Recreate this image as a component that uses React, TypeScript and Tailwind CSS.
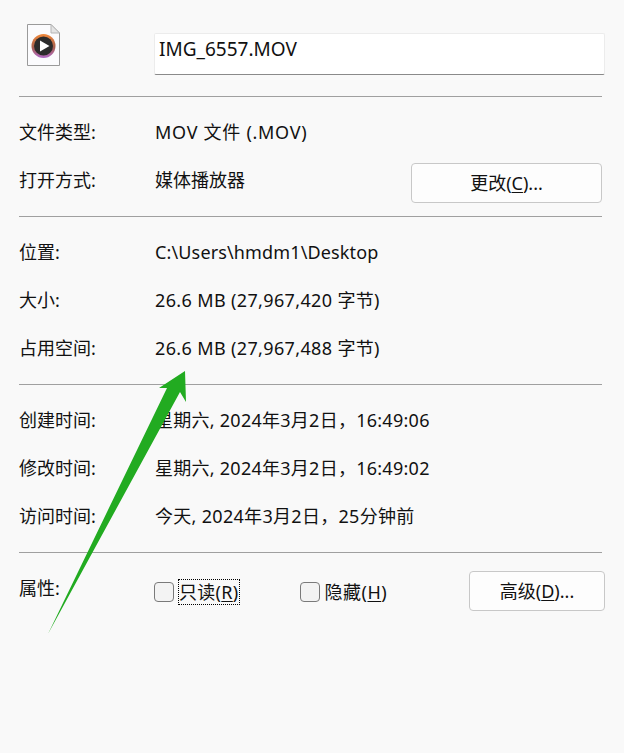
import React from 'react';

const font = { fontFamily: '"Noto Sans", "Noto Sans CJK SC", sans-serif' };

const Divider = () => <div className="h-px bg-[#a0a0a0] mr-[3px]" />;

const InfoRow = ({ label, value, tracking }: { label: string; value: string; tracking: string }) => (
  <div className="flex items-center h-12">
    <span className="w-[136px] shrink-0">{label}</span>
    <span className={tracking}>{value}</span>
  </div>
);

const FileIcon = () => (
  <svg width="34" height="44" viewBox="0 0 34 44" className="block">
    <path d="M.5.5H24L32.5 9V41.5H.5Z" fill="#fbfbfd" stroke="#9a9a9a" />
    <path d="M24 .5V9H32.5Z" fill="#e4e4e4" stroke="#b5b5b5" />
    <defs>
      <linearGradient id="ring" x1="0" y1="0" x2="0" y2="1">
        <stop offset="0" stopColor="#f0883a" />
        <stop offset="0.55" stopColor="#a8604f" />
        <stop offset="1" stopColor="#b06ac8" />
      </linearGradient>
    </defs>
    <circle cx="16.5" cy="22" r="12" fill="url(#ring)" />
    <circle cx="16.5" cy="22" r="9.5" fill="#2b2b2b" />
    <path d="M13 16.5L22.5 22L13 27.5Z" fill="#fff" />
  </svg>
);

const Button = ({ name, hotkey, className }: { name: string; hotkey: string; className: string }) => (
  <button className={`h-10 bg-[#fdfdfd] border border-[#c8c8c8] rounded-[4px] text-[18px] ${className}`}>
    {name}(<span className="underline underline-offset-2">{hotkey}</span>)...
  </button>
);

const Arrow = () => (
  <svg width="624" height="753" viewBox="0 0 624 753" className="absolute inset-0 pointer-events-none">
    <path d="M48 634L167 388L159 388L185 371L186 402L180 392Z" fill="#22ab21" />
  </svg>
);

export default function App() {
  return (
    <div className="relative w-[624px] h-[753px] overflow-hidden bg-[#f9f9f9] text-[#111111] text-[18px] pl-[19px] pr-[19px]" style={font}>
      {/* Name header */}
      <div className="flex h-[96px]">
        <div className="w-[136px] shrink-0 pt-6 pl-2">
          <FileIcon />
        </div>
        <div className="mt-[33px] -ml-px h-[42px] w-[451px] bg-white border border-[#ececec] border-b-[#8a8a8a] rounded-[2px] pl-1 text-[19px] leading-[30px]">
          IMG_6557.MOV
        </div>
      </div>
      <Divider />

      {/* Type */}
      <div className="h-[119px] pt-[11px]">
        <InfoRow label="文件类型:" value="MOV 文件 (.MOV)" tracking="tracking-[0.72px]" />
        <div className="flex items-center h-12">
          <span className="w-[136px] shrink-0">打开方式:</span>
          <span className="flex-1">媒体播放器</span>
          <Button name="更改" hotkey="C" className="w-[191px] mr-[3px] mt-[6px]" />
        </div>
      </div>
      <Divider />

      {/* Location and size */}
      <div className="h-[167px] pt-[11px]">
        <InfoRow label="位置:" value="C:\Users\hmdm1\Desktop" tracking="tracking-[0.14px]" />
        <InfoRow label="大小:" value="26.6 MB (27,967,420 字节)" tracking="tracking-[0.36px]" />
        <InfoRow label="占用空间:" value="26.6 MB (27,967,488 字节)" tracking="tracking-[0.36px]" />
      </div>
      <Divider />

      {/* Dates */}
      <div className="h-[167px] pt-[11px]">
        <InfoRow label="创建时间:" value="星期六, 2024年3月2日，16:49:06" tracking="tracking-[0.26px]" />
        <InfoRow label="修改时间:" value="星期六, 2024年3月2日，16:49:02" tracking="tracking-[0.26px]" />
        <InfoRow label="访问时间:" value="今天, 2024年3月2日，25分钟前" tracking="tracking-[0.3px]" />
      </div>
      <Divider />

      {/* Attributes */}
      <div className="flex items-center h-[40px] mt-[18px]">
        <span className="w-[135px] shrink-0 -mt-[6px]">属性:</span>
        <span className="w-5 h-5 mt-[2px] bg-[#f3f3f3] border border-[#7a7a7a] rounded-[4px] mr-[5px]" />
        <span className="outline-1 outline-dotted outline-black tracking-[0.3px] leading-[24px] mt-[2px]">
          只读(<span className="underline underline-offset-2">R</span>)
        </span>
        <span className="w-5 h-5 mt-[2px] bg-[#f3f3f3] border border-[#7a7a7a] rounded-[4px] ml-[61px] mr-[5px]" />
        <span className="tracking-[0.5px] leading-[24px] mt-[2px]">
          隐藏(<span className="underline underline-offset-2">H</span>)
        </span>
        <Button name="高级" hotkey="D" className="w-[136px] ml-auto" />
      </div>

      <Arrow />
    </div>
  );
}
